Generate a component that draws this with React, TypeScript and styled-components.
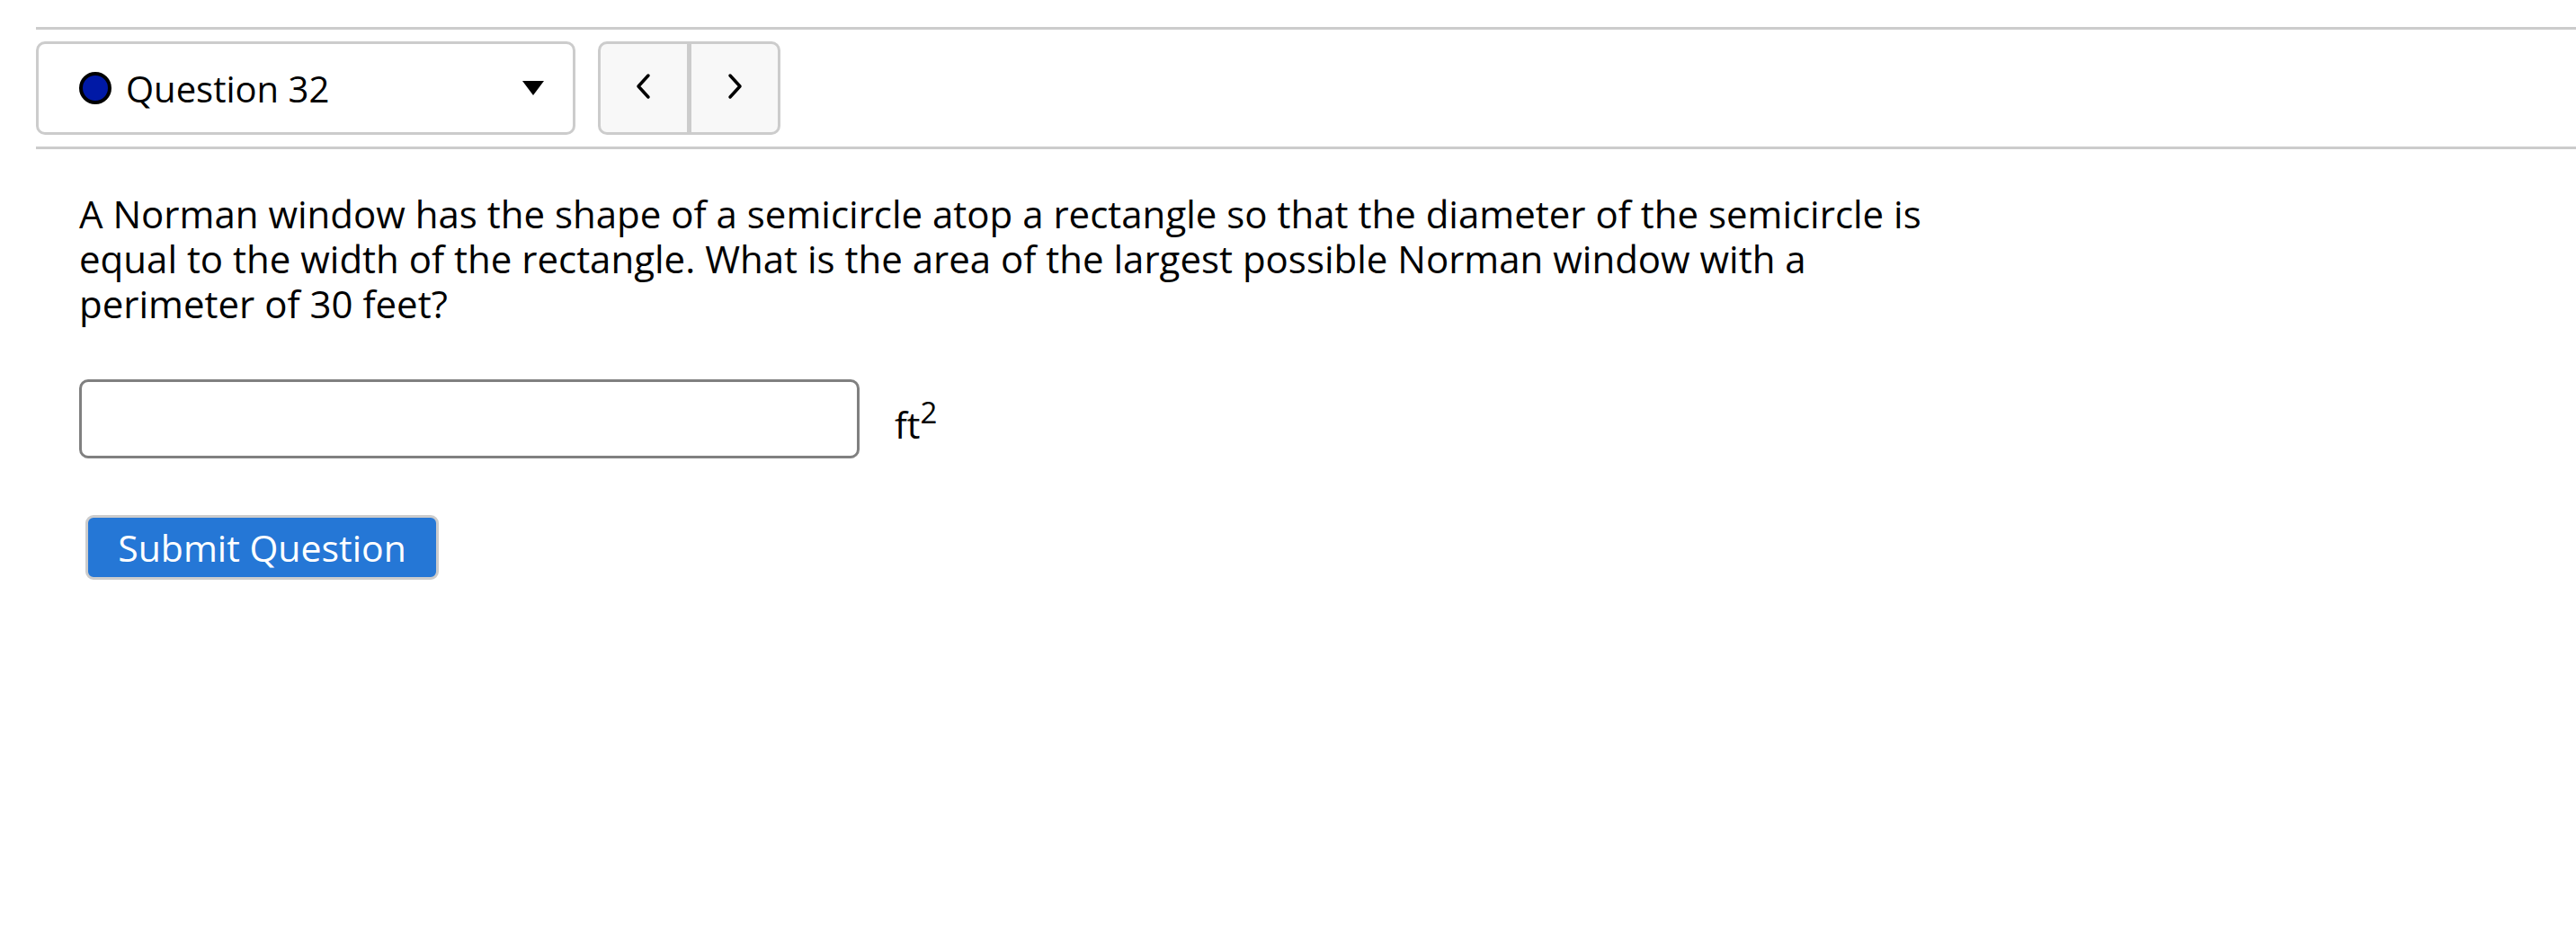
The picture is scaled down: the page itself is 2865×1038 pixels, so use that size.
import React from "react";
import styled, { createGlobalStyle } from "styled-components";

const GlobalStyle = createGlobalStyle`
  html, body {
    margin: 0;
    padding: 0;
    background: #fff;
  }
  body {
    font-family: "Open Sans", "Liberation Sans", sans-serif;
    color: #000;
  }
`;

const Page = styled.div`
  padding-top: 30px;
`;

const Header = styled.div`
  display: flex;
  align-items: center;
  gap: 25px;
  margin-left: 40px;
  padding: 13px 0;
  border-top: 3px solid #cccccc;
  border-bottom: 3px solid #cccccc;
`;

const Select = styled.div`
  box-sizing: border-box;
  width: 600px;
  height: 104px;
  display: flex;
  align-items: center;
  gap: 16px;
  padding: 0 32px 0 45px;
  border: 3px solid #cccccc;
  border-radius: 10px;
  background: #fff;
  font-size: 40px;
`;

const Dot = styled.span`
  box-sizing: border-box;
  width: 36px;
  height: 36px;
  border-radius: 50%;
  border: 4px solid #000;
  background: #0019a6;
  flex: none;
`;

const SelectLabel = styled.span`
  flex: 1;
  line-height: 1;
  padding-top: 1px;
`;

const Nav = styled.div`
  box-sizing: border-box;
  width: 203px;
  height: 104px;
  display: flex;
  border: 3px solid #cccccc;
  border-radius: 10px;
  background: #f8f8f8;
  overflow: hidden;
`;

const NavButton = styled.button<{ $divider?: boolean }>`
  flex: 1;
  display: flex;
  align-items: center;
  justify-content: center;
  padding: 0 0 5px;
  border: none;
  border-right: ${(p) => (p.$divider ? "5px solid #cccccc" : "none")};
  background: transparent;
  cursor: pointer;
`;

const Body = styled.div`
  padding-left: 88px;
  padding-top: 47px;
`;

const Prompt = styled.p`
  margin: 0;
  width: 2110px;
  font-size: 42px;
  line-height: 50px;
`;

const AnswerRow = styled.div`
  display: flex;
  align-items: center;
  gap: 39px;
  margin-top: 59px;
`;

const AnswerInput = styled.input`
  box-sizing: border-box;
  width: 868px;
  height: 88px;
  border: 3px solid #808080;
  border-radius: 10px;
  background: #fff;
  font: inherit;
  font-size: 40px;
  padding: 0 16px;
  outline: none;
`;

const Unit = styled.span`
  font-size: 41px;
  line-height: 1;
  padding-top: 12px;

  sup {
    font-size: 33px;
    vertical-align: 17px;
    line-height: 0;
  }
`;

const SubmitButton = styled.button`
  box-sizing: border-box;
  margin: 63px 0 0 7px;
  width: 393px;
  height: 72px;
  padding: 0 0 1px;
  border: 3px solid #cccccc;
  border-radius: 9px;
  background: #2577d6;
  color: #fff;
  font-family: "Open Sans", "Liberation Sans", sans-serif;
  font-size: 41px;
  cursor: pointer;
`;

const Chevron = ({ dir }: { dir: "left" | "right" }) => (
  <svg width="20" height="30" viewBox="0 0 20 30">
    <polyline
      points={dir === "left" ? "15,3 4,15 15,27" : "5,3 16,15 5,27"}
      fill="none"
      stroke="#000"
      strokeWidth="3.5"
      strokeLinecap="round"
      strokeLinejoin="round"
    />
  </svg>
);

const Caret = () => (
  <svg width="24" height="16" viewBox="0 0 24 16">
    <polygon points="0,0 24,0 12,16" fill="#000" />
  </svg>
);

export default function App() {
  return (
    <Page>
      <GlobalStyle />
      <Header>
        <Select>
          <Dot />
          <SelectLabel>Question 32</SelectLabel>
          <Caret />
        </Select>
        <Nav>
          <NavButton $divider aria-label="Previous question">
            <Chevron dir="left" />
          </NavButton>
          <NavButton aria-label="Next question">
            <Chevron dir="right" />
          </NavButton>
        </Nav>
      </Header>
      <Body>
        <Prompt>
          A Norman window has the shape of a semicircle atop a rectangle so that
          the diameter of the semicircle is equal to the width of the rectangle.
          What is the area of the largest possible Norman window with a
          perimeter of 30 feet?
        </Prompt>
        <AnswerRow>
          <AnswerInput type="text" />
          <Unit>
            ft<sup>2</sup>
          </Unit>
        </AnswerRow>
        <SubmitButton>Submit Question</SubmitButton>
      </Body>
    </Page>
  );
}
